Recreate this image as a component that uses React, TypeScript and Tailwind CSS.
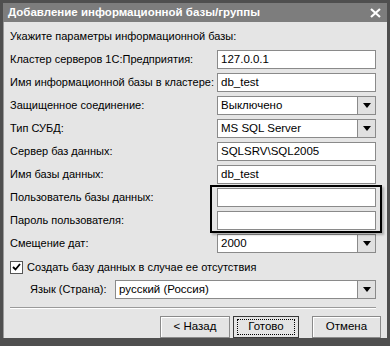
import { type FC } from "react"

const font = { fontFamily: '"Liberation Sans", Arial, sans-serif' }

const TextInput: FC<{ value?: string }> = ({ value }) => (
    <div className="flex h-[19px] flex-1 items-center whitespace-nowrap border border-[#8a8a8a] bg-white px-[3px] text-[11.5px] text-black">
        {value}
    </div>
)

const Combo: FC<{ value: string }> = ({ value }) => (
    <div className="flex h-[19px] flex-1 border border-[#8a8a8a] bg-white">
        <div className="flex flex-1 items-center whitespace-nowrap px-[3px] text-[11.5px] text-black">{value}</div>
        <div className="flex w-[18px] items-center justify-center border-l border-[#8a8a8a] bg-[#e0e0e0]">
            <svg width="8" height="5" viewBox="0 0 8 5">
                <path d="M0 0 H8 L4 5 Z" fill="#000" />
            </svg>
        </div>
    </div>
)

const Row: FC<{ label: string; children: React.ReactNode }> = ({ label, children }) => (
    <div className="flex h-[19px] items-center">
        <div className="w-[207px] shrink-0 whitespace-nowrap text-[11px] text-black">{label}</div>
        {children}
    </div>
)

const Btn: FC<{ label: string; main?: boolean; w: string }> = ({ label, main, w }) => (
    <div
        className={
            "flex h-[22px] shrink-0 items-center justify-center bg-[#e4e4e4] text-[11.5px] text-black " +
            w +
            (main ? " border border-[#3a3a3a]" : " border border-[#8a8a8a] shadow-[inset_1px_1px_0_#ffffff]")
        }
    >
        {main ? (
            <div className="flex h-[16px] w-[58px] items-center justify-center border border-dotted border-black">
                {label}
            </div>
        ) : (
            label
        )}
    </div>
)

const App: FC = () => {
    return (
        <div style={font} className="h-[346px] w-[390px] bg-[#4f4f4f] p-[3px]">
            <div className="flex h-[19px] items-center justify-between bg-[#7d7d7d] pl-[5px] pr-[6px]">
                <span className="whitespace-nowrap text-[11.5px] font-bold text-white">
                    Добавление информационной базы/группы
                </span>
                <svg width="11" height="10" viewBox="0 0 11 10">
                    <path d="M1 1 L10 9 M10 1 L1 9" stroke="#fff" strokeWidth="2.2" />
                </svg>
            </div>
            <div className="flex h-[316px] flex-col border-l border-[#9a9a9a] bg-[#e5e5e5] pl-[6px] pr-[11px] pt-[6px]">
                <div className="h-[16px] whitespace-nowrap text-[11px] leading-[16px] text-black">
                    Укажите параметры информационной базы:
                </div>
                <div className="relative mt-[6px] flex flex-col gap-[4px]">
                    <Row label="Кластер серверов 1С:Предприятия:">
                        <TextInput value="127.0.0.1" />
                    </Row>
                    <Row label="Имя информационной базы в кластере:">
                        <TextInput value="db_test" />
                    </Row>
                    <Row label="Защищенное соединение:">
                        <Combo value="Выключено" />
                    </Row>
                    <Row label="Тип СУБД:">
                        <Combo value="MS SQL Server" />
                    </Row>
                    <Row label="Сервер баз данных:">
                        <TextInput value="SQLSRV\SQL2005" />
                    </Row>
                    <Row label="Имя базы данных:">
                        <TextInput value="db_test" />
                    </Row>
                    <Row label="Пользователь базы данных:">
                        <TextInput />
                    </Row>
                    <Row label="Пароль пользователя:">
                        <TextInput />
                    </Row>
                    <Row label="Смещение дат:">
                        <Combo value="2000" />
                    </Row>
                    <div className="absolute left-[200px] top-[135px] h-[48px] w-[172px] border-2 border-black shadow-[2px_2px_2px_rgba(0,0,0,0.25)]" />
                </div>
                <div className="mt-[6px] flex h-[16px] items-center gap-[4px]">
                    <div className="flex h-[13px] w-[13px] items-center justify-center border border-[#555] bg-white">
                        <svg width="9" height="8" viewBox="0 0 9 8">
                            <path d="M1 4 L3.5 6.5 L8 1" stroke="#000" strokeWidth="1.8" fill="none" />
                        </svg>
                    </div>
                    <span className="whitespace-nowrap text-[11px] text-black">
                        Создать базу данных в случае ее отсутствия
                    </span>
                </div>
                <div className="mt-[5px] flex h-[19px] items-center pl-[20px]">
                    <div className="w-[85px] shrink-0 whitespace-nowrap text-[11px] text-black">Язык (Страна):</div>
                    <Combo value="русский (Россия)" />
                </div>
                <div className="mt-[8px] h-[2px] border-t border-b border-t-[#9a9a9a] border-b-white" />
                <div className="-mr-[5px] mt-[7px] flex justify-end gap-[3px]">
                    <Btn label="< Назад" w="w-[70px]" />
                    <Btn label="Готово" main w="w-[66px]" />
                    <div className="w-[7px] shrink-0" />
                    <Btn label="Отмена" w="w-[69px]" />
                </div>
            </div>
        </div>
    )
}

export default App
